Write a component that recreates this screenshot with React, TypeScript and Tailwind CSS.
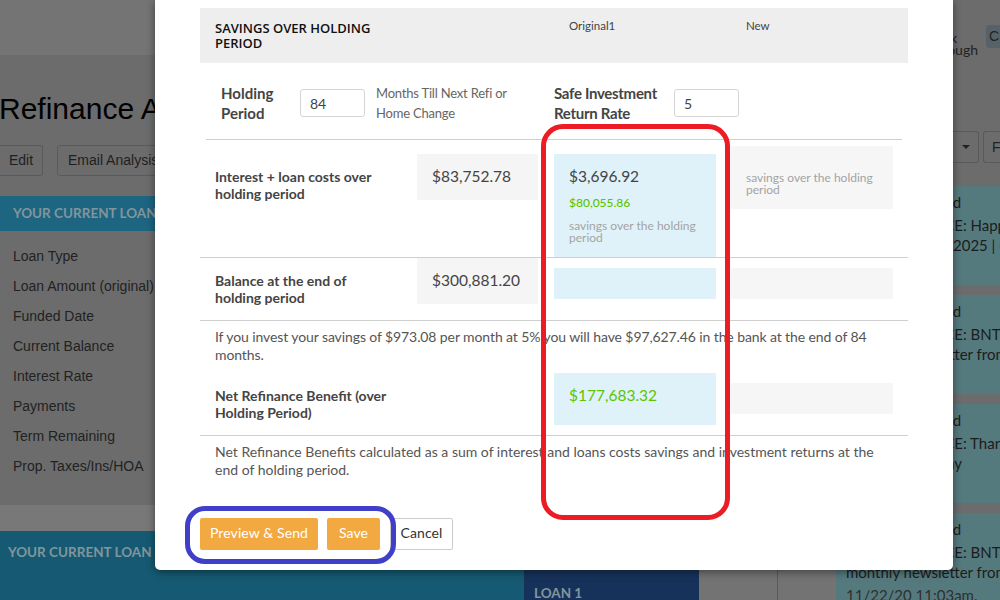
import type { ReactNode } from "react";

const loanRows = ["Loan Type", "Loan Amount (original)", "Funded Date", "Current Balance", "Interest Rate", "Payments", "Term Remaining", "Prop. Taxes/Ins/HOA"];

function NewsCard({ title, line, date }: { title: string; line: string; date: string }) {
  return (
    <div className="h-[99px] shrink-0 bg-[#557a7e] pl-[10px] pt-[6px] text-[15px] leading-[20px] text-[#1c1c1c] whitespace-nowrap font-['Lato',sans-serif]">
      <div className="pl-[56px]">Received</div>
      <div className="mt-[3px] -ml-[16px]">{title}</div>
      <div>{line}</div>
      <div className="mt-[3px] text-[#2f2f2f]">{date}</div>
    </div>
  );
}

function RowLabel({ children }: { children: ReactNode }) {
  return <div className="w-[202px] shrink-0 pr-[26px] font-bold text-[14px] leading-[17px] text-[#444]">{children}</div>;
}

function Money({ children }: { children: ReactNode }) {
  return <div className="text-[15.5px] leading-[22px] text-[#444]">{children}</div>;
}

function SavingsNote() {
  return <div className="text-[12px] leading-[12px] text-[#a3a3a3]">savings over the holding period</div>;
}

export default function App() {
  return (
    <div className="relative w-[1000px] h-[600px] overflow-hidden bg-[#6c6c6c] font-['Liberation_Sans',sans-serif]">
      {/* page behind the dialog */}
      <div className="flex h-[600px]">
        <div className="w-[836px] shrink-0 flex flex-col">
          <div className="h-[55px] shrink-0 bg-[#747474]" />
          <div className="mt-[36px] -ml-[1px] text-[30px] leading-[36px] text-black whitespace-nowrap">Refinance Analysis</div>
          <div className="flex gap-[14px] mt-[18px] h-[31px] text-[14px] leading-[29px] text-[#1f1f1f]">
            <div className="w-[43px] pl-[9px] border border-l-0 border-[#5a5a5a] rounded-r-[3px]">Edit</div>
            <div className="w-[200px] pl-[10px] border border-[#5a5a5a] rounded-[3px]">Email Analysis</div>
          </div>
          <div className="mt-[20px] h-[35px] w-[400px] pl-[13px] bg-[#1d6580] text-[#82959d] font-['Lato',sans-serif] font-bold text-[13.5px] leading-[35px]">YOUR CURRENT LOAN</div>
          <div className="flex flex-col pl-[13px] pt-[10px] pb-[24px] text-[14px] leading-[30px] text-[#222]">
            {loanRows.map((r) => (
              <div key={r} className="h-[30px] whitespace-nowrap">{r}</div>
            ))}
          </div>
          <div className="h-[26px] shrink-0 bg-[#787878]" />
          <div className="flex flex-1 font-['Lato',sans-serif] font-bold text-[13.5px] leading-[20px] text-[#82959d]">
            <div className="w-[524px] pl-[8px] pt-[11px] bg-[#155a72]">YOUR CURRENT LOAN</div>
            <div className="w-[175px] pl-[10px] pt-[52px] bg-[#17325a]">LOAN 1</div>
            <div className="w-[79px] bg-[#737373] border-r border-[#5a5a5a]" />
            <div className="flex-1 bg-[#737373]" />
          </div>
        </div>
        <div className="flex-1 min-w-0 overflow-hidden flex flex-col pt-[25px]">
          <div className="h-[23px] flex justify-end items-start gap-[8px]">
            <div className="text-right text-[14px] leading-[12px] pt-[7px] text-[#222] font-['Lato',sans-serif]">
              <div className="pr-[21px]">Back</div>
              <div>through</div>
            </div>
            <div className="w-[14px] h-[23px] bg-[#56626a] rounded-l-[4px] text-[14px] leading-[23px] pl-[3px] text-[#222]">C</div>
          </div>
          <div className="flex justify-end gap-[4px] mt-[83px] h-[32px]">
            <div className="w-[26px] border border-l-0 border-[#5a5a5a] rounded-r-[3px] flex items-center justify-center">
              <div className="border-x-[4px] border-x-transparent border-t-[4px] border-t-[#222]" />
            </div>
            <div className="w-[17px] pl-[8px] border border-r-0 border-[#5a5a5a] rounded-l-[3px] text-[14px] leading-[30px] text-[#222]">F</div>
          </div>
          <div className="flex flex-col gap-[10px] mt-[23px]">
            <NewsCard title="COMPANY NOTICE: Happy" line="Happy Holidays 2025 | Office" date="11/24/20" />
            <NewsCard title="COMPANY NOTICE: BNT" line="monthly newsletter from" date="11/23/20" />
            <NewsCard title="COMPANY NOTICE: Thank" line="Thanksgiving Day" date="11/23/20" />
            <NewsCard title="COMPANY NOTICE: BNT" line="monthly newsletter from" date="11/22/20 11:03am." />
          </div>
        </div>
      </div>

      {/* dialog */}
      <div className="absolute left-[155px] top-0 w-[798px] h-[570px] bg-white rounded-b-[5px] shadow-[0_2px_8px_rgba(0,0,0,0.45)] flex flex-col pl-[45px] pr-[45px] pt-[8px] font-['Lato',sans-serif]">
        <div className="h-[55px] shrink-0 bg-[#eeeeee] flex">
          <div className="w-[354px] pl-[15px] pt-[13px] font-['Open_Sans',sans-serif] font-semibold text-[13px] leading-[15px] text-[#111]">
            <div className="w-[180px]">SAVINGS OVER HOLDING PERIOD</div>
          </div>
          <div className="w-[177px] pl-[15px] pt-[10px] text-[11.5px] leading-[16px] text-[#444]">Original1</div>
          <div className="pl-[15px] pt-[10px] text-[11.5px] leading-[16px] text-[#444]">New</div>
        </div>

        <div className="h-[77px] shrink-0 mx-[6px] border-b border-[#cfcfcf] flex items-center pl-[15px] pt-[4px]">
          <div className="w-[79px] font-bold text-[15px] leading-[20px] text-[#444]">Holding Period</div>
          <input readOnly value="84" className="w-[65px] h-[28px] pl-[9px] border border-[#d5d5d5] rounded-[3px] text-[14px] text-[#444] outline-none" />
          <div className="w-[189px] pl-[11px] pr-[30px] text-[13px] leading-[20px] text-[#666] tracking-[-0.2px]">Months Till Next Refi or Home Change</div>
          <div className="w-[120px] font-bold text-[15px] leading-[20px] text-[#444] tracking-[-0.3px]">Safe Investment Return Rate</div>
          <input readOnly value="5" className="w-[65px] h-[28px] pl-[9px] border border-[#d5d5d5] rounded-[3px] text-[14px] text-[#444] outline-none" />
        </div>

        <div className="h-[118px] shrink-0 border-b border-[#cfcfcf] flex items-start pl-[15px]">
          <div className="mt-[28px]"><RowLabel>Interest + loan costs over holding period</RowLabel></div>
          <div className="w-[121px] h-[46px] mt-[14px] pl-[15px] pt-[11px] bg-[#f5f5f5]"><Money>$83,752.78</Money></div>
          <div className="w-[162px] h-[103px] mt-[14px] ml-[16px] px-[15px] pt-[11px] bg-[#e0f2f9]">
            <Money>$3,696.92</Money>
            <div className="mt-[9px] text-[12px] leading-[14px] font-medium text-[#5cc400]">$80,055.86</div>
            <div className="mt-[10px]"><SavingsNote /></div>
          </div>
          <div className="w-[162px] h-[63px] mt-[6px] ml-[15px] px-[15px] pt-[26px] bg-[#f6f6f6]"><SavingsNote /></div>
        </div>

        <div className="h-[63px] shrink-0 border-b border-[#cfcfcf] flex items-start pl-[15px]">
          <div className="mt-[14px]"><RowLabel>Balance at the end of holding period</RowLabel></div>
          <div className="w-[121px] h-[46px] pl-[15px] pt-[11px] bg-[#f5f5f5]"><Money>$300,881.20</Money></div>
          <div className="w-[162px] h-[31px] mt-[10px] ml-[16px] bg-[#e0f2f9]" />
          <div className="w-[162px] h-[31px] mt-[10px] ml-[15px] bg-[#f6f6f6]" />
        </div>

        <div className="pl-[15px] pr-[34px] pt-[7px] text-[14px] leading-[18px] text-[#555] tracking-[-0.1px]">If you invest your savings of $973.08 per month at 5% you will have $97,627.46 in the bank at the end of 84 months.</div>

        <div className="h-[63px] shrink-0 mt-[9px] border-b border-[#cfcfcf] flex items-start pl-[15px]">
          <div className="mt-[14px]"><RowLabel>Net Refinance Benefit (over Holding Period)</RowLabel></div>
          <div className="w-[121px]" />
          <div className="w-[162px] h-[52px] ml-[16px] pl-[15px] pt-[11px] bg-[#e0f2f9] text-[15.5px] leading-[22px] text-[#5cc400]">$177,683.32</div>
          <div className="w-[162px] h-[31px] mt-[10px] ml-[15px] bg-[#f6f6f6]" />
        </div>

        <div className="pl-[15px] pr-[34px] pt-[7px] text-[14px] leading-[18px] text-[#555]">Net Refinance Benefits calculated as a sum of interest and loans costs savings and investment returns at the end of holding period.</div>

        <div className="flex gap-[9px] mt-[39px] h-[32px] text-[14px] tracking-[0.1px]">
          <button className="w-[118px] pb-[3px] bg-[#f2a942] rounded-[2px] text-white">Preview &amp; Send</button>
          <button className="w-[53px] pb-[3px] bg-[#f2a942] rounded-[2px] text-white">Save</button>
          <button className="w-[63px] ml-[1px] pb-[3px] bg-white border border-[#ccc] rounded-[2px] text-[#333]">Cancel</button>
        </div>
      </div>

      {/* hand-drawn highlights on top of the screenshot */}
      <div className="absolute left-[541px] top-[124px] w-[189px] h-[396px] border-[5px] border-[#ed1c24] rounded-[22px]" />
      <div className="absolute left-[185px] top-[506px] w-[211px] h-[58px] border-[5px] border-[#3f3fc8] rounded-[20px]" />
    </div>
  );
}
